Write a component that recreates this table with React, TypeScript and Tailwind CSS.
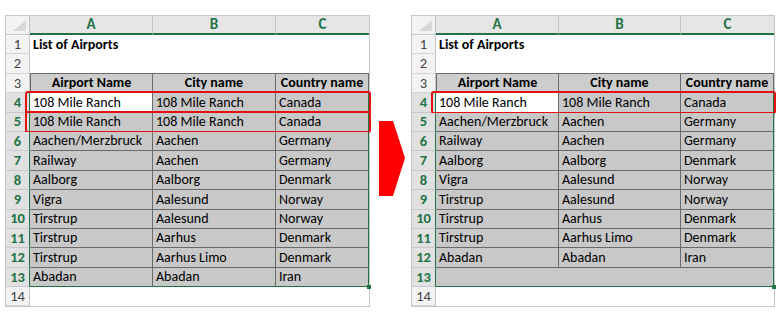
import React from "react";

type Sheet = {
  rows: string[][];
  emptyLast?: boolean;
  highlight: number[];
  cols: string;
};

const FONT = "font-['Carlito','Lato','Liberation_Sans',sans-serif]";

const left: Sheet = {
  cols: "grid-cols-[24px_123px_123px_93px]",
  highlight: [4, 5],
  rows: [
    ["108 Mile Ranch", "108 Mile Ranch", "Canada"],
    ["108 Mile Ranch", "108 Mile Ranch", "Canada"],
    ["Aachen/Merzbruck", "Aachen", "Germany"],
    ["Railway", "Aachen", "Germany"],
    ["Aalborg", "Aalborg", "Denmark"],
    ["Vigra", "Aalesund", "Norway"],
    ["Tirstrup", "Aalesund", "Norway"],
    ["Tirstrup", "Aarhus", "Denmark"],
    ["Tirstrup", "Aarhus Limo", "Denmark"],
    ["Abadan", "Abadan", "Iran"],
  ],
};

const right: Sheet = {
  cols: "grid-cols-[24px_123px_122px_93px]",
  highlight: [4],
  emptyLast: true,
  rows: [
    ["108 Mile Ranch", "108 Mile Ranch", "Canada"],
    ["Aachen/Merzbruck", "Aachen", "Germany"],
    ["Railway", "Aachen", "Germany"],
    ["Aalborg", "Aalborg", "Denmark"],
    ["Vigra", "Aalesund", "Norway"],
    ["Tirstrup", "Aalesund", "Norway"],
    ["Tirstrup", "Aarhus", "Denmark"],
    ["Tirstrup", "Aarhus Limo", "Denmark"],
    ["Abadan", "Abadan", "Iran"],
  ],
};

const RowNum = ({ n, selected }: { n: number; selected: boolean }) => (
  <div
    className={
      selected
        ? "flex items-end justify-center pb-[2px] bg-[#e1e1e1] border-b border-b-[#c9c9c9] border-r border-r-[#217346] text-[#217346] font-bold text-[14.5px]"
        : "flex items-end justify-center pb-[2px] bg-[#f3f3f3] border-b border-b-[#d4d4d4] border-r border-r-[#c6c6c6] text-[#444] text-[14.5px]"
    }
  >
    {n}
  </div>
);

const SheetView = ({ sheet }: { sheet: Sheet }) => {
  const data = sheet.emptyLast ? [...sheet.rows, ["", "", ""]] : sheet.rows;
  return (
    <div className={`border border-[#c6c6c6] bg-white ${FONT} text-[14px] leading-none text-black`}>
      {/* column header */}
      <div className={`grid ${sheet.cols} h-[19px]`}>
        <div className="relative bg-[#f3f3f3] border-r border-b border-[#c6c6c6]">
          <div className="absolute right-[3px] bottom-[3px] w-0 h-0 border-l-[13px] border-l-transparent border-b-[11px] border-b-[#d8d8d8]" />
        </div>
        {["A", "B", "C"].map((c, i) => (
          <div
            key={c}
            className={`flex items-center justify-center bg-[#e6e6e6] border-b-2 border-b-[#217346] font-bold text-[#217346] text-[15px] ${
              i < 2 ? "border-r border-r-[#c6c6c6]" : ""
            }`}
          >
            {c}
          </div>
        ))}
      </div>

      {/* row 1 */}
      <div className={`grid ${sheet.cols} h-[19.4px]`}>
        <RowNum n={1} selected={false} />
        <div className="col-span-3 flex items-end pl-[3px] pb-[2px] font-bold">List of Airports</div>
      </div>

      {/* row 2 */}
      <div className={`grid ${sheet.cols} h-[19.4px]`}>
        <RowNum n={2} selected={false} />
        <div className="border-b border-[#6a6a6a]" />
        <div className="border-b border-[#6a6a6a]" />
        <div className="border-b border-[#6a6a6a]" />
      </div>

      {/* row 3 headers */}
      <div className={`grid ${sheet.cols} h-[19.4px]`}>
        <RowNum n={3} selected={false} />
        {["Airport Name", "City name", "Country name"].map((h, i) => (
          <div
            key={h}
            className={`flex items-end justify-center pb-[2px] bg-[#cdcdcd] font-bold whitespace-nowrap border-b border-[#6a6a6a] ${
              i === 0 ? "border-l" : ""
            } border-r`}
          >
            {h}
          </div>
        ))}
      </div>

      {/* data rows */}
      {data.map((r, idx) => {
        const n = idx + 4;
        const last = idx === data.length - 1;
        const empty = r.every((v) => v === "");
        return (
          <div key={n} className={`relative grid ${sheet.cols} h-[19.4px]`}>
            <RowNum n={n} selected />
            {empty ? (
              <div className="col-span-3 bg-[#c8c8c8] border-b border-[#217346] border-r" />
            ) : (
              r.map((v, i) => (
                <div
                  key={i}
                  className={`flex items-end pl-[3px] pb-[2px] whitespace-nowrap overflow-hidden ${
                    idx === 0 && i === 0 ? "bg-white" : "bg-[#c8c8c8]"
                  } border-b ${last ? "border-b-[#217346]" : "border-b-[#6a6a6a]"} border-r ${
                    i === 2 ? "border-r-[#217346]" : "border-r-[#6a6a6a]"
                  }`}
                >
                  {v}
                </div>
              ))
            )}
            {sheet.highlight.includes(n) && (
              <div className="absolute left-[19px] right-[-2px] top-[-2px] bottom-[-1px] border-[2.5px] border-[#e60f14] rounded-[3px] pointer-events-none" />
            )}
            {last && (
              <div className="absolute right-[-2px] bottom-[-2px] w-[4px] h-[4px] bg-[#217346]" />
            )}
          </div>
        );
      })}

      {/* row 14 */}
      <div className={`grid ${sheet.cols} h-[19.4px]`}>
        <RowNum n={14} selected={false} />
        <div className="col-span-3" />
      </div>
    </div>
  );
}

export default function App() {
  return (
    <div className="w-[780px] h-[321px] bg-white flex items-start pt-[15px] pl-[5px]">
      <SheetView sheet={left} />
      <svg width="26" height="75" viewBox="0 0 26 75" className="ml-[9px] mt-[106px]">
        <polygon points="0,0 14,0 26,37 14,75 0,75" fill="#ff0000" />
      </svg>
      <div className="ml-[6px]">
        <SheetView sheet={right} />
      </div>
    </div>
  );
}
